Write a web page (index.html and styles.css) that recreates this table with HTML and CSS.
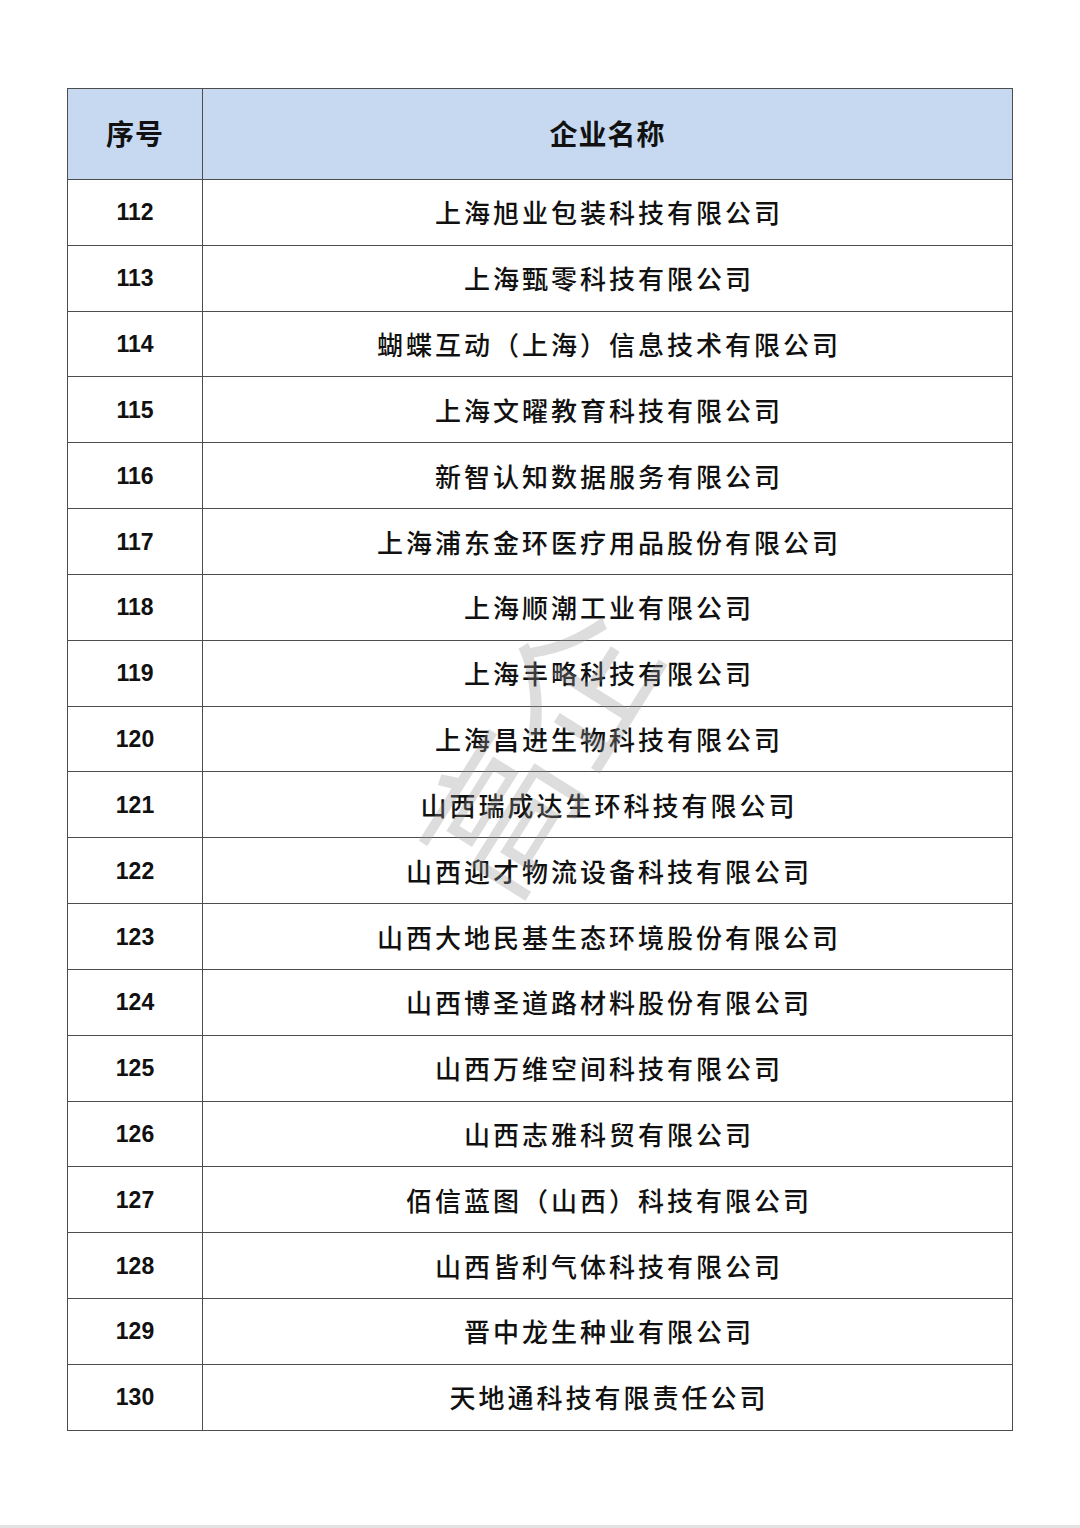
FILE: index.html
```html
<!DOCTYPE html>
<html lang="zh-CN">
<head>
<meta charset="utf-8">
<title>企业名单</title>
<link rel="stylesheet" href="styles.css">
</head>
<body>
<div class="page">
  <table class="list">
    <thead>
      <tr class="head-row"><th class="c-no">序号</th><th class="c-name">企业名称</th></tr>
    </thead>
    <tbody>
      <tr><td class="no">112</td><td class="name">上海旭业包装科技有限公司</td></tr>
      <tr><td class="no">113</td><td class="name">上海甄零科技有限公司</td></tr>
      <tr><td class="no">114</td><td class="name">蝴蝶互动（上海）信息技术有限公司</td></tr>
      <tr><td class="no">115</td><td class="name">上海文曜教育科技有限公司</td></tr>
      <tr><td class="no">116</td><td class="name">新智认知数据服务有限公司</td></tr>
      <tr><td class="no">117</td><td class="name">上海浦东金环医疗用品股份有限公司</td></tr>
      <tr><td class="no">118</td><td class="name">上海顺潮工业有限公司</td></tr>
      <tr><td class="no">119</td><td class="name">上海丰略科技有限公司</td></tr>
      <tr><td class="no">120</td><td class="name">上海昌进生物科技有限公司</td></tr>
      <tr><td class="no">121</td><td class="name">山西瑞成达生环科技有限公司</td></tr>
      <tr><td class="no">122</td><td class="name">山西迎才物流设备科技有限公司</td></tr>
      <tr><td class="no">123</td><td class="name">山西大地民基生态环境股份有限公司</td></tr>
      <tr><td class="no">124</td><td class="name">山西博圣道路材料股份有限公司</td></tr>
      <tr><td class="no">125</td><td class="name">山西万维空间科技有限公司</td></tr>
      <tr><td class="no">126</td><td class="name">山西志雅科贸有限公司</td></tr>
      <tr><td class="no">127</td><td class="name">佰信蓝图（山西）科技有限公司</td></tr>
      <tr><td class="no">128</td><td class="name">山西皆利气体科技有限公司</td></tr>
      <tr><td class="no">129</td><td class="name">晋中龙生种业有限公司</td></tr>
      <tr><td class="no">130</td><td class="name">天地通科技有限责任公司</td></tr>
    </tbody>
  </table>
  <div class="watermark">高企</div>
</div>
<div class="bottom-band"></div>
</body>
</html>
```
FILE: styles.css
```css
html, body {
  margin: 0;
  padding: 0;
  background: #ffffff;
}
body {
  width: 1080px;
  height: 1528px;
  overflow: hidden;
  position: relative;
  font-family: "Noto Sans CJK SC", "Noto Sans", sans-serif;
}
.page {
  position: relative;
  padding: 88px 0 0 67px;
  height: 1438px;
}
.list {
  border-collapse: collapse;
  width: 946px;
  table-layout: fixed;
}
.list th, .list td {
  border: 1.6px solid #4d4d4d;
  padding: 0;
  text-align: center;
  vertical-align: middle;
}
.head-row {
  height: 91px;
}
.list th {
  background: #c6d9f0;
  font-family: "Noto Sans CJK SC", sans-serif;
  font-weight: 700;
  font-size: 28px;
  line-height: 30px;
  color: #111;
  letter-spacing: 1px;
  padding-bottom: 3px;
}
.c-no { width: 134px; }
.list tbody tr {
  height: 65.84px;
}
.list td {
  color: #111;
}
.no {
  font-family: "Liberation Sans", Arial, sans-serif;
  font-weight: 700;
  font-size: 23px;
  line-height: 26px;
}
.name {
  font-family: "Noto Sans CJK SC", sans-serif;
  font-weight: 500;
  font-size: 26px;
  line-height: 30px;
  letter-spacing: 3px;
  text-indent: 3px;
}
.watermark {
  position: absolute;
  left: 352px;
  top: 645px;
  width: 360px;
  height: 200px;
  font-family: "Noto Sans CJK SC", sans-serif;
  font-weight: 400;
  font-size: 150px;
  line-height: 200px;
  text-align: center;
  color: rgba(150, 150, 150, 0.32);
  transform: rotate(-58deg);
  pointer-events: none;
}
.bottom-band {
  position: absolute;
  left: 0;
  bottom: 0;
  width: 1080px;
  height: 3px;
  background: #e3e3e3;
}
```
